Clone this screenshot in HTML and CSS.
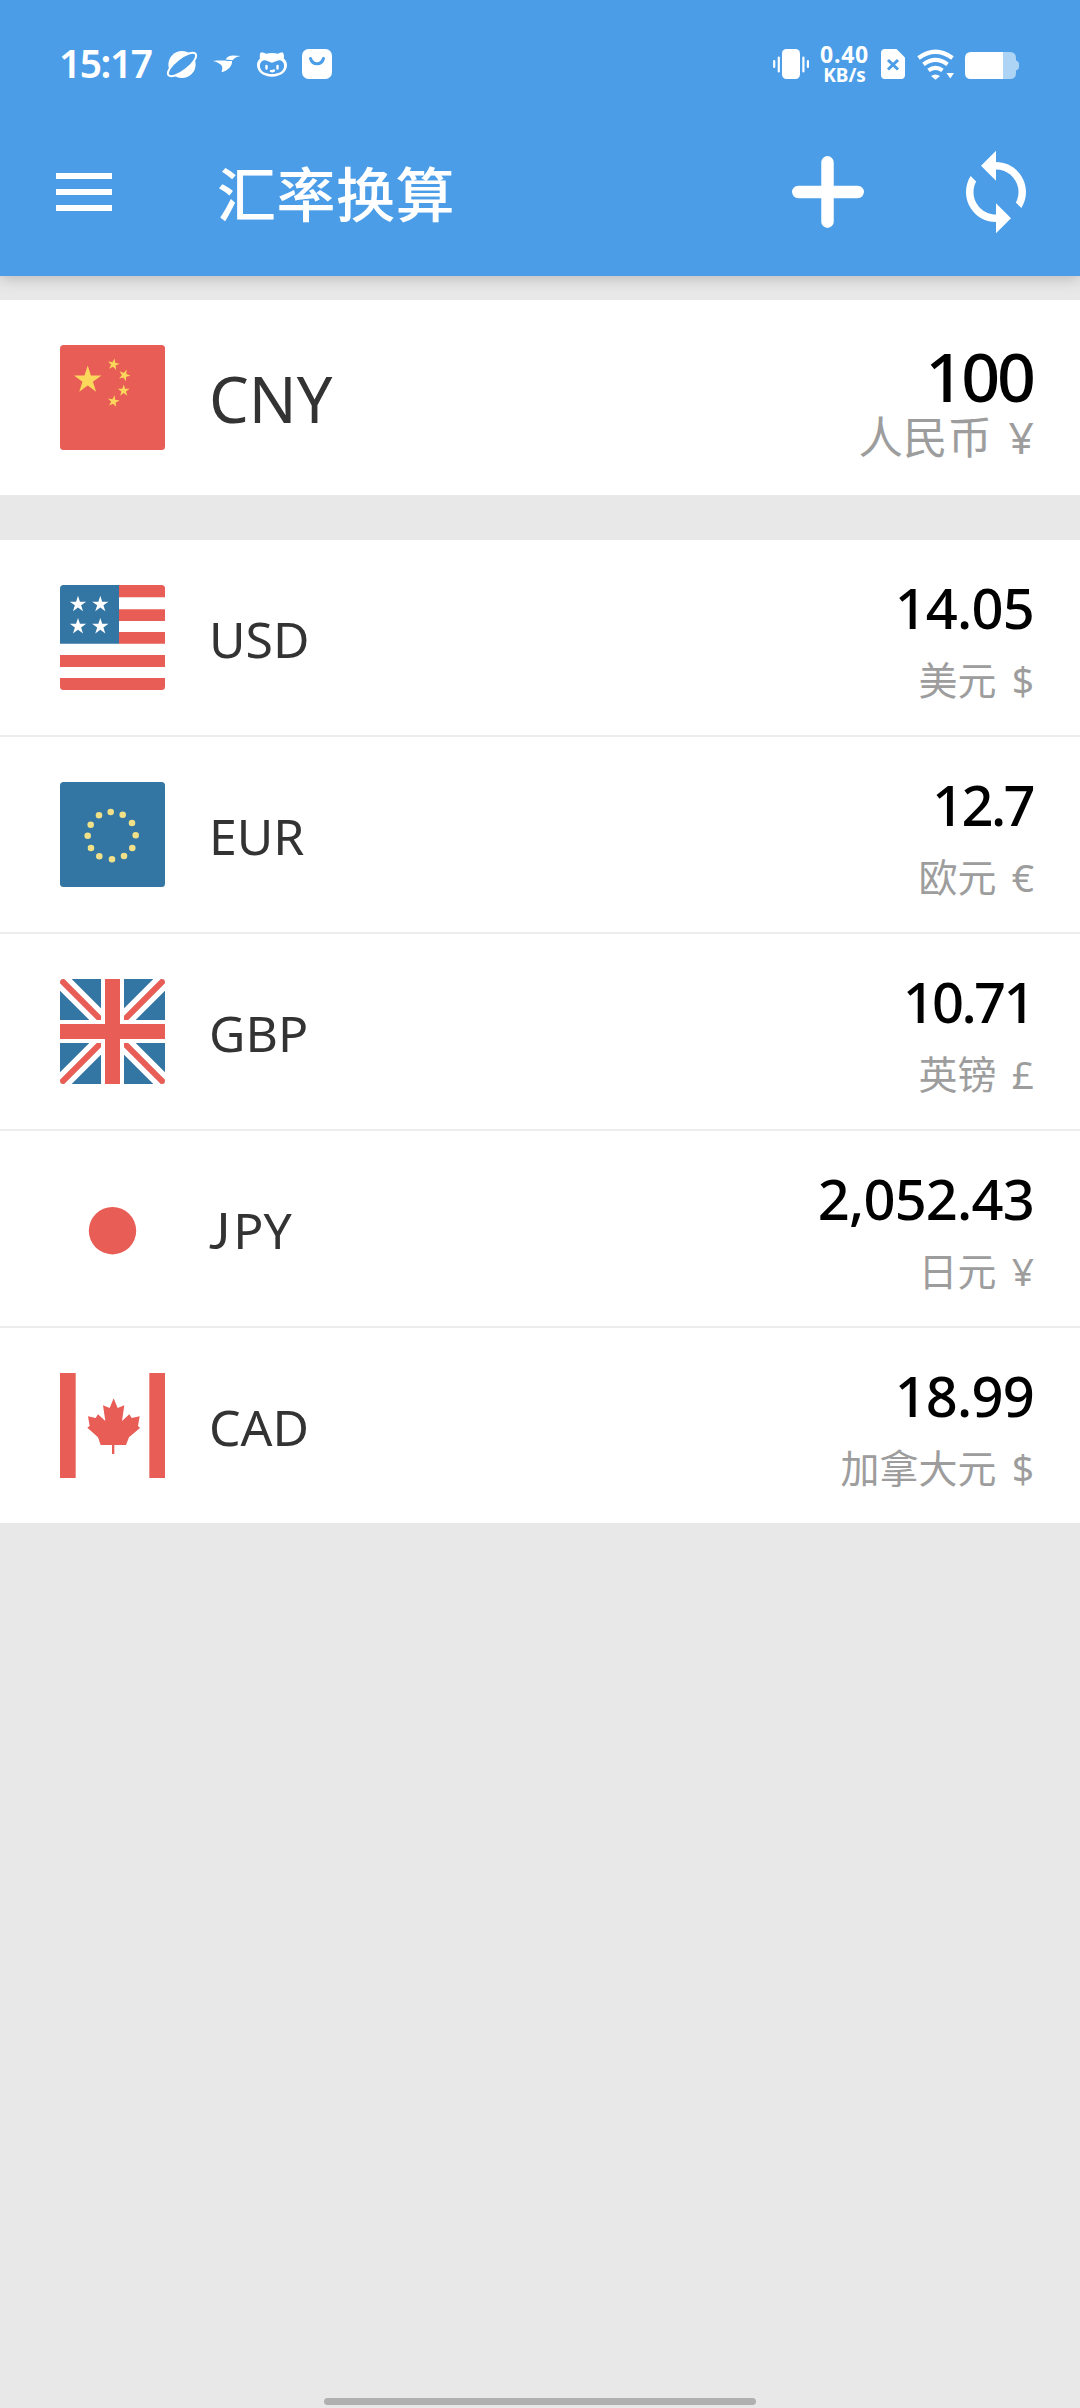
FILE: index.html
```html
<!DOCTYPE html>
<html lang="zh-CN">
<head>
<meta charset="utf-8">
<title>汇率换算</title>
<link rel="stylesheet" href="styles.css">
</head>
<body>
<svg width="0" height="0" class="defs"><defs>
  <path id="star" d="M0-1 .2245-.309 .951-.309 .363 .118 .588 .809 0 .382-.588 .809-.363 .118-.951-.309-.2245-.309Z"/>
</defs></svg>
<div class="screen">
  <header class="header">
    <div class="status">
      <div class="status-left">
        <span class="time">15:17</span>
        <svg width="32" height="36" viewBox="166 46 32 36"><circle cx="182" cy="64.5" r="13.6" fill="#fff"/><ellipse cx="182" cy="64.5" rx="17.2" ry="6.2" transform="rotate(-38 182 64.5)" fill="#4b9de8" stroke="#fff" stroke-width="2"/></svg>
        <svg width="30" height="36" viewBox="212 46 30 36"><path fill="#fff" d="M213 61c5-.6 11-.6 14.500 0l4.500 0c.5 4.500-3.500 9.500-10.500 11.300 .8-2.500 1-4.500 .6-6-2-3-5-4.300-9.100-5.300zM225.500 59.500c2-3 4.500-3.900 7.500-3.900l8 .5c-4 .5-6 1.300-8.500 4.200z"/></svg>
        <svg width="32" height="36" viewBox="256 46 32 36"><path fill="#fff" d="M260.500 52.500c2.500-.2 4 .3 5.500 1.300 4-1 8-1 12 0 1.500-1 3-1.500 5-1.300 1 2 1.200 4 .8 6 2.200 2 3.200 4 3.200 6.500 0 7-6.500 11.700-15 11.700S257 72 257 65c0-2.500 1-4.500 3-6.500-.4-2-.3-4 .5-6z"/><path fill="#4b9de8" d="M260 67c-.6-5 3-7.500 6-6.500l6 2.200 6-2.200c3-1 6.600 1.500 6 6.500-1 5-6 7-12 7s-11-2-12-7z"/><path stroke="#fff" stroke-width="2.400" stroke-linecap="round" fill="none" d="M266.500 66v2.500M277.500 66v2.500M271 71q1.500 .8 3-.5"/></svg>
        <svg width="32" height="36" viewBox="301 46 32 36"><rect x="302" y="49" width="30" height="30" rx="6.500" fill="#fff"/><path d="M310.500 58.500c2 7 11 7 13 0" fill="none" stroke="#4b9de8" stroke-width="3" stroke-linecap="round"/></svg>
      </div>
      <div class="status-right">
        <svg width="38" height="36" viewBox="773 46 38 36"><rect x="783" y="49" width="18" height="30" rx="4.500" fill="#fff"/><path stroke="#fff" stroke-width="2.200" stroke-linecap="round" d="M775.200 61v6M779.800 57.500v14M804.400 57.500v14M808.900 61v6"/></svg>
        <div class="speed"><span class="rate">0.40</span><span class="unit">KB/s</span></div>
        <svg width="24" height="36" viewBox="882 46 24 36"><path fill="#fff" d="M886 49h11.500l8.500 8.500V75q0 4-4 4h-16q-4 0-4-4V53q0-4 4-4z"/><path stroke="#4b9de8" stroke-width="3" d="M889 60l10 9.500M899 60l-10 9.500"/></svg>
        <svg width="38" height="36" viewBox="918 46 38 36"><g fill="none" stroke="#fff" stroke-width="4.200"><path d="M919.500 58q17-12.500 34 0M924.500 64.400q12-9 24 0M929.500 70.400q7-5 14 0"/></g><path fill="#fff" d="M932 76q4.500-3 9 0l-4.500 3.700zM947.500 73h7.500l-3.700 5.500z"/></svg>
        <svg width="56" height="36" viewBox="965 46 56 36"><path fill="#fff" fill-opacity=".55" d="M1004 52h7q6 0 6 6v2.500q3 1 3 3v4q0 2-3 3V73q0 6-6 6h-7z"/><path fill="#fff" d="M972 52h32v27h-32q-6 0-6-6V58q0-6 6-6z"/></svg>
      </div>
    </div>
    <div class="toolbar">
      <svg class="menu" width="56" height="38" viewBox="0 0 56 38"><path fill="#fff" d="M0 0h56v6H0zM0 16h56v6H0zM0 32h56v6H0z"/></svg>
      <h1 class="title">汇率换算</h1>
      <svg class="add" width="72" height="72" viewBox="0 0 72 72"><path stroke="#fff" stroke-width="12.500" stroke-linecap="round" d="M6.300 36h59.400M35.500 6.300v59.400"/></svg>
      <svg class="sync" width="90" height="90" viewBox="0 0 24 24"><path fill="#fff" d="M12 4V1L8 5l4 4V6c3.310 0 6 2.690 6 6 0 1.010-.25 1.970-.7 2.800l1.460 1.460C19.540 15.030 20 13.570 20 12c0-4.420-3.580-8-8-8zm0 14c-3.310 0-6-2.690-6-6 0-1.010.25-1.970.7-2.800L5.240 7.740C4.460 8.970 4 10.430 4 12c0 4.420 3.580 8 8 8v3l4-4-4-4v3z"/></svg>
    </div>
  </header>
  <main>
    <section class="row base">
      <svg class="flag" viewBox="0 0 105 105"><rect width="105" height="105" fill="#e85d55"/><g fill="#fbd75b"><use href="#star" transform="translate(27.700 35) scale(14.400)"/><use href="#star" transform="translate(53.500 19.500) rotate(10) scale(6.200)"/><use href="#star" transform="translate(64.300 30.300) rotate(22) scale(6.200)"/><use href="#star" transform="translate(63.700 45.700) scale(6.200)"/><use href="#star" transform="translate(53.500 56.300) rotate(10) scale(6.200)"/></g></svg>
      <span class="code">CNY</span>
      <div class="money"><span class="amount">100</span><span class="label">人民币 <i>¥</i></span></div>
    </section>
    <section class="list">
      <div class="row">
        <svg class="flag" viewBox="0 0 105 105"><rect width="105" height="105" fill="#fff"/><path fill="#e85d55" d="M59 0h46v12.300H59zM59 24.300h46v11.700H59zM59 47h46v11.700H59zM0 70h105v12H0zM0 93h105v12H0z"/><path fill="#3375a3" d="M0 0h59v58.700H0z"/><g fill="#fff"><use href="#star" transform="translate(18 19.300) scale(8.600)"/><use href="#star" transform="translate(40.300 19.300) scale(8.600)"/><use href="#star" transform="translate(18 41.500) scale(8.600)"/><use href="#star" transform="translate(40.300 41.500) scale(8.600)"/></g></svg>
        <span class="code">USD</span>
        <div class="money"><span class="amount">14.05</span><span class="label">美元 <i>$</i></span></div>
      </div>
      <div class="row">
        <svg class="flag" viewBox="0 0 105 105"><rect width="105" height="105" fill="#3375a3"/><path fill="none" stroke="#f0e087" stroke-width="6.600" stroke-linecap="round" d="M50.700 30h0M62.700 32.700h0M72 41h0M75.700 53.300h0M72.300 66h0M64 74h0M52 77.300h0M39.300 74.300h0M31 66h0M27.700 53.700h0M30.700 42.700h0M39 33.300h0"/></svg>
        <span class="code">EUR</span>
        <div class="money"><span class="amount tight">12.7</span><span class="label">欧元 <i>€</i></span></div>
      </div>
      <div class="row">
        <svg class="flag" viewBox="0 0 105 105"><rect width="105" height="105" fill="#3375a3"/><path stroke="#fff" stroke-width="16.500" d="M-5-5 110 110M110-5-5 110"/><path stroke="#e85d55" stroke-width="6" d="M0 0 105 105M105 0 0 105"/><path fill="#fff" d="M41 0h23v41h41v23H64v41H41V64H0V41h41z"/><path fill="#e85d55" d="M45 0h15v45h45v15H60v45H45V60H0V45h45z"/></svg>
        <span class="code">GBP</span>
        <div class="money"><span class="amount tight">10.71</span><span class="label">英镑 <i>£</i></span></div>
      </div>
      <div class="row">
        <svg class="flag" viewBox="0 0 105 105"><circle cx="52.500" cy="54.700" r="23.700" fill="#e85d55"/></svg>
        <span class="code"><span class="hook">J</span>PY</span>
        <div class="money"><span class="amount">2,052.43</span><span class="label">日元 <i>¥</i></span></div>
      </div>
      <div class="row">
        <svg class="flag square" viewBox="60 69 315 315"><path fill="#e85d55" d="M60 69h47v315H60zM328 69h47v315h-47zM221 145 209 174 189 166 196 213 174 193 167 204 144 199 149 228 142 233 174 262 182 285H216V312H223V285H258L267 262 300 234 294 228 299 199 275 204 268 193 246 213 253 166 233 174Z"/></svg>
        <span class="code">CAD</span>
        <div class="money"><span class="amount">18.99</span><span class="label">加拿大元 <i>$</i></span></div>
      </div>
    </section>
  </main>
  <footer class="nav"><span class="handle"></span></footer>
</div>
</body>
</html>
```
FILE: styles.css
```css
* { box-sizing: border-box; }
body { margin: 0; background: #e8e8e8; font-family: "Noto Sans", "Noto Sans CJK SC", sans-serif; }
svg { display: block; flex: none; }
.defs { display: none; }
.screen { width: 1080px; height: 2408px; display: flex; flex-direction: column; }

.header { height: 276px; background: #4b9de8; color: #fff; box-shadow: 0 2px 14px rgba(0, 0, 0, .22); }
.status { height: 128px; padding: 0 60px 0 59px; display: flex; justify-content: space-between; }
.status-left, .status-right { display: flex; height: 128px; }
.status svg { margin-top: 46px; }
.time { width: 107px; margin-top: 35px; font-size: 39px; font-weight: 600; line-height: 55px; letter-spacing: -1.5px; white-space: nowrap; }
.status-left svg + svg { margin-left: 14px; }
.status-left svg:nth-of-type(4) { margin-left: 13px; }
.speed { width: 71px; padding: 41px 2px 0 0; display: flex; flex-direction: column; align-items: center; font-weight: 700; }
.rate { font-size: 23px; line-height: 27px; letter-spacing: .8px; }
.unit { font-size: 19px; line-height: 15px; }
.status-right svg:nth-of-type(2) { margin-left: 0; }
.status-right svg:nth-of-type(3) { margin-left: 12px; }
.status-right svg:nth-of-type(4) { margin-left: 9px; }

.toolbar { height: 128px; padding: 0 39px 0 56px; display: flex; align-items: center; }
.title { margin: 0; margin-left: 105px; padding-top: 4px; flex: 1; font-size: 59px; font-weight: 500; line-height: 80px; letter-spacing: .5px; }
.sync { margin-left: 87px; }

.row { height: 195px; padding: 0 46px 0 60px; background: #fff; display: flex; align-items: center; }
.base { margin: 24px 0 45px; }
.list .row + .row { border-top: 2px solid #ececec; height: 197px; }
.flag { width: 105px; height: 105px; border-radius: 3.5px; }
.square { border-radius: 0; }
.code { margin-left: 44px; padding-top: 2px; flex: 1; color: #333; font-size: 50px; line-height: 70px; }
.hook { font-family: "Lato", sans-serif; margin-right: 3px; }
.base .code { font-size: 63px; }
.money { align-self: flex-start; padding-top: 34px; display: flex; flex-direction: column; align-items: flex-end; white-space: nowrap; }
.amount { color: #000; font-size: 56px; font-weight: 500; line-height: 67px; letter-spacing: -.8px; }
.tight { letter-spacing: -2.6px; margin-right: 1px; }
.label { color: #9d9d9d; font-size: 39px; line-height: 77px; }
.label i { font-style: normal; margin-left: 5px; }
.base .money { padding-top: 40px; }
.base .amount { font-size: 68px; line-height: 72px; letter-spacing: -3px; margin-right: 1px; }
.base .label { font-size: 44.5px; line-height: 50px; }

.nav { margin-top: auto; height: 10px; display: flex; justify-content: center; }
.handle { width: 432px; height: 7px; border-radius: 4px; background: #b0b0b0; }
```
